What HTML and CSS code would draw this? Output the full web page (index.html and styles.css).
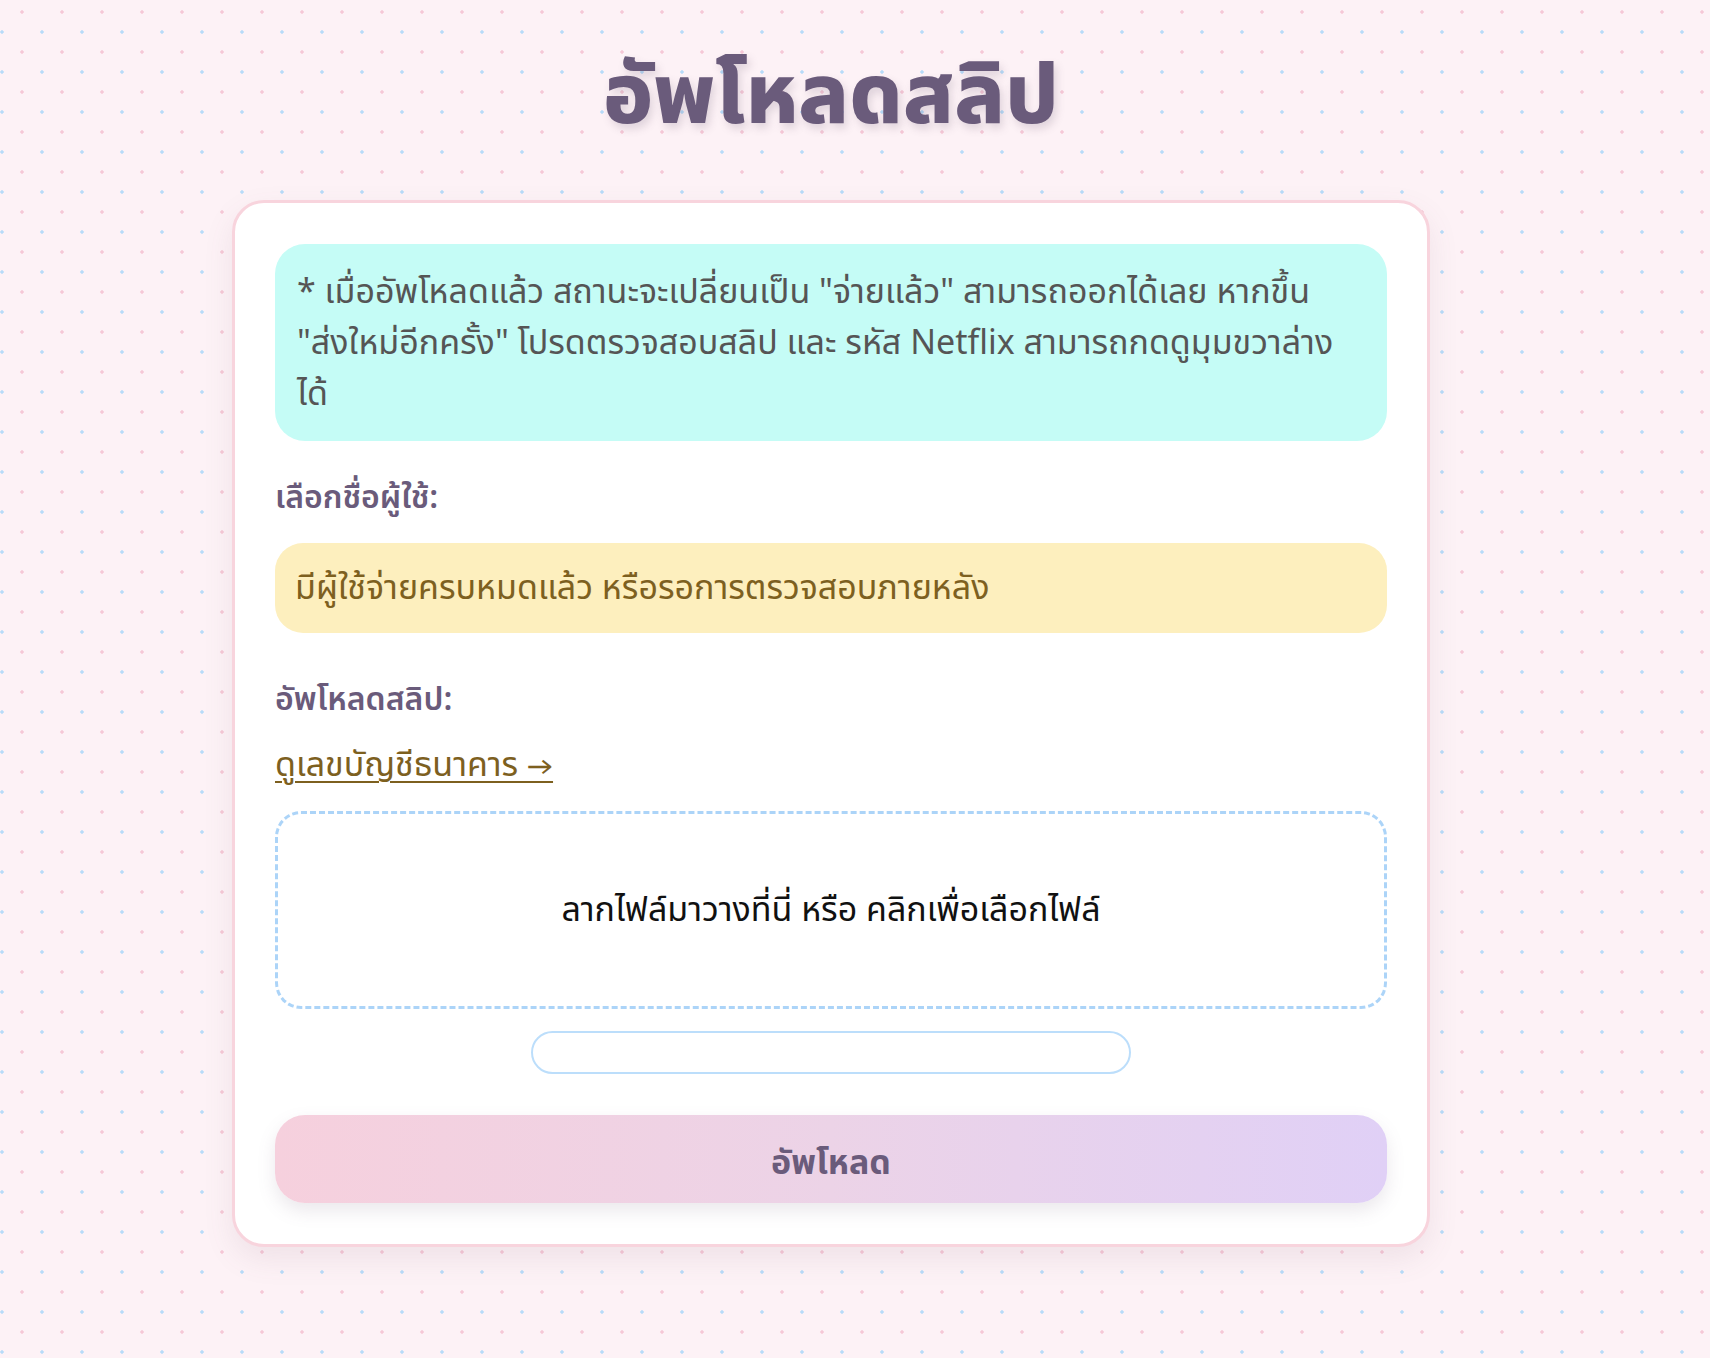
FILE: index.html
```html
<!DOCTYPE html>
<html lang="th">
<head>
<meta charset="utf-8">
<title>อัพโหลดสลิป</title>
<link rel="stylesheet" href="styles.css">
</head>
<body>
<main class="page">
  <h1 class="title">อัพโหลดสลิป</h1>
  <section class="card">
    <div class="notice">* เมื่ออัพโหลดแล้ว สถานะจะเปลี่ยนเป็น "จ่ายแล้ว" สามารถออกได้เลย หากขึ้น "ส่งใหม่อีกครั้ง" โปรดตรวจสอบสลิป และ รหัส Netflix สามารถกดดูมุมขวาล่างได้</div>
    <div class="field-label label-user">เลือกชื่อผู้ใช้:</div>
    <div class="alert">มีผู้ใช้จ่ายครบหมดแล้ว หรือรอการตรวจสอบภายหลัง</div>
    <div class="field-label label-slip">อัพโหลดสลิป:</div>
    <a class="bank-link" href="#">ดูเลขบัญชีธนาคาร →</a>
    <div class="dropzone">ลากไฟล์มาวางที่นี่ หรือ คลิกเพื่อเลือกไฟล์</div>
    <div class="progress"></div>
    <button class="submit" type="button">อัพโหลด</button>
  </section>
</main>
</body>
</html>
```

FILE: styles.css
```css
html {
  background-color: #fdf2f6;
  background-image:
    radial-gradient(circle, #f6c8d7 1.4px, transparent 2px),
    radial-gradient(circle, #b7dbf9 1.4px, transparent 2px);
  background-size: 40px 40px, 40px 40px;
  background-position: 2px -8px, -18px 12px;
  min-height: 100%;
}

body {
  margin: 0;
  font-family: "Noto Sans Thai", "Kanit", "Prompt", "Noto Sans Thai UI", "Noto Sans", sans-serif;
  color: #555;
}

.page {
  padding: 0 48px 111px 0;
  display: flex;
  flex-direction: column;
  align-items: center;
}

.title {
  margin: 48px 0 0;
  height: 152px;
  font-size: 84px;
  line-height: 100px;
  font-weight: 800;
  color: #6a5b7b;
  text-shadow: 3px 5px 8px rgba(90, 70, 100, 0.18);
}

.card {
  box-sizing: border-box;
  width: 1198px;
  background: #fff;
  border: 3px solid #f8d4dd;
  border-radius: 32px;
  padding: 41px 40px 41px;
  box-shadow: 0 12px 30px rgba(120, 90, 110, 0.10);
  display: flex;
  flex-direction: column;
}

.notice {
  background: #c5fcf6;
  border-radius: 30px;
  padding: 23px 24px 21px 22px;
  font-size: 34px;
  line-height: 51px;
  color: #555;
}

.field-label {
  font-size: 32px;
  line-height: 40px;
  font-weight: 600;
  color: #6a5b7b;
}

.label-user {
  margin-top: 37px;
}

.alert {
  margin-top: 25px;
  height: 90px;
  box-sizing: border-box;
  background: #fdefbe;
  border-radius: 28px;
  padding: 0 20px;
  display: flex;
  align-items: center;
  font-size: 34px;
  color: #7d601f;
}

.label-slip {
  margin-top: 47px;
}

.bank-link {
  align-self: flex-start;
  margin-top: 26px;
  font-size: 34px;
  line-height: 40px;
  color: #7d601f;
  text-decoration: underline;
  text-decoration-thickness: 2px;
  text-underline-offset: 5px;
}

.dropzone {
  margin-top: 25px;
  height: 198px;
  box-sizing: border-box;
  border: 3px dashed #acd4f8;
  border-radius: 26px;
  display: flex;
  align-items: center;
  justify-content: center;
  font-size: 34px;
  color: #111;
}

.progress {
  align-self: center;
  margin-top: 22px;
  width: 600px;
  height: 43px;
  box-sizing: border-box;
  border: 2px solid #bcdefb;
  border-radius: 22px;
}

.submit {
  margin-top: 41px;
  height: 88px;
  padding-top: 10px;
  border: none;
  border-radius: 30px;
  background: linear-gradient(90deg, #f6d0dd 0%, #ecd3e7 50%, #e0d0f6 100%);
  box-shadow: 0 8px 18px rgba(120, 100, 130, 0.15);
  font-family: inherit;
  font-size: 34px;
  font-weight: 700;
  color: #6a5b7b;
}
```
